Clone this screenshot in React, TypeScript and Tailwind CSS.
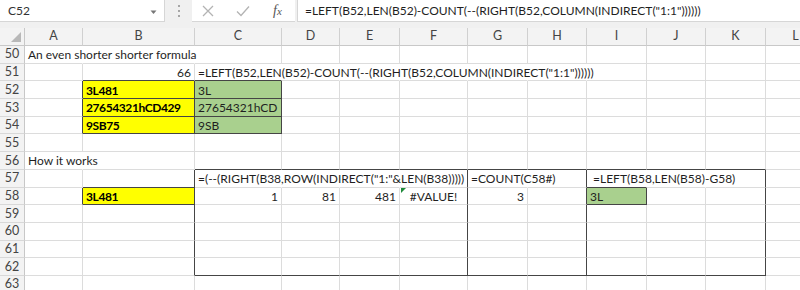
import React from "react";

const COLS = ["A", "B", "C", "D", "E", "F", "G", "H", "I", "J", "K", "L"];
const WIDTHS = [58, 112, 87, 58, 60, 68, 60, 59, 60, 59, 60, 60];
const ROWS = [50, 51, 52, 53, 54, 55, 56, 57, 58, 59, 60, 61, 62, 63];

type Cell = {
  t: string;
  align?: "l" | "r" | "c";
  bold?: boolean;
  fill?: "y" | "g";
  tri?: boolean;
};

const DATA: Record<string, Cell> = {
  A50: { t: "An even shorter shorter formula" },
  B51: { t: "66", align: "r" },
  C51: { t: '=LEFT(B52,LEN(B52)-COUNT(--(RIGHT(B52,COLUMN(INDIRECT("1:1"))))))' },
  B52: { t: "3L481", bold: true, fill: "y" },
  C52: { t: "3L", fill: "g" },
  B53: { t: "27654321hCD429", bold: true, fill: "y" },
  C53: { t: "27654321hCD", fill: "g" },
  B54: { t: "9SB75", bold: true, fill: "y" },
  C54: { t: "9SB", fill: "g" },
  A56: { t: "How it works" },
  C57: { t: '=(--(RIGHT(B38,ROW(INDIRECT("1:"&LEN(B38)))))' },
  G57: { t: "=COUNT(C58#)" },
  I57: { t: " =LEFT(B58,LEN(B58)-G58)" },
  B58: { t: "3L481", bold: true, fill: "y" },
  C58: { t: "1", align: "r" },
  D58: { t: "81", align: "r" },
  E58: { t: "481", align: "r" },
  F58: { t: "#VALUE!", align: "c", tri: true },
  G58: { t: "3", align: "r" },
  I58: { t: "3L", fill: "g" },
};

const DARK = new Set(["B52", "B53", "B54", "C52", "C53", "C54", "B58", "I58"]);
const HIDDEN_RIGHT = new Set([
  "A50", "B50",
  "C51", "D51", "E51", "F51", "G51", "H51",
  "A56",
  "C57", "D57", "E57", "G57", "I57", "J57",
]);

const isDark = (r: number, c: number) => c >= 0 && c < 12 && DARK.has(COLS[c] + r);

const rightDark = (r: number, c: number) =>
  isDark(r, c) || isDark(r, c + 1) || (r >= 57 && r <= 62 && [1, 5, 7, 10].includes(c));

const bottomDark = (r: number, c: number) =>
  isDark(r, c) || isDark(r + 1, c) || ((r === 56 || r === 62) && c >= 2 && c <= 10);

const FONT = { fontFamily: "Lato, 'Liberation Sans', sans-serif" } as const;

function GridCell({ r, c }: { r: number; c: number }) {
  const key = COLS[c] + r;
  const cell = DATA[key];
  const rd = rightDark(r, c);
  const bd = bottomDark(r, c);
  const rightCls = rd
    ? "border-r-[#454545]"
    : HIDDEN_RIGHT.has(key)
    ? "border-r-transparent"
    : "border-r-[#dcdcdc]";
  const bottomCls = bd ? "border-b-[#454545]" : "border-b-[#dcdcdc]";
  const fillCls = cell?.fill === "y" ? "bg-[#ffff00]" : cell?.fill === "g" ? "bg-[#a9d08e]" : "";
  const alignCls =
    cell?.align === "r" ? "justify-end pr-[3px]" : cell?.align === "c" ? "justify-center" : "justify-start pl-[3px]";
  return (
    <div
      className={`relative flex shrink-0 items-center h-full border-r border-b ${rightCls} ${bottomCls} ${fillCls} ${alignCls}`}
      style={{ width: WIDTHS[c] }}
    >
      {cell?.tri && (
        <div className="absolute left-[1px] top-0 w-0 h-0 border-t-[5px] border-t-[#1e8a3a] border-r-[5px] border-r-transparent" />
      )}
      {cell && (
        <span
          className={`whitespace-pre text-[12px] leading-none pt-[2px] ${
            cell.bold ? "font-bold text-black tracking-[-0.4px]" : "text-[#1f1f1f]"
          }`}
        >
          {cell.t}
        </span>
      )}
    </div>
  );
}

export default function App() {
  return (
    <div className="w-[800px] h-[290px] overflow-hidden bg-white" style={FONT}>
      {/* formula bar */}
      <div className="flex h-[28px] bg-[#f0f0f0] pb-[6px]">
        <div className="flex w-[165px] shrink-0 items-center justify-between bg-white border-b border-r border-[#d6d6d6] pl-[8px] pr-[7px]">
          <span className="text-[12px] text-[#333]">C52</span>
          <svg width="7" height="5" viewBox="0 0 7 5" className="mt-[4px]">
            <path d="M0.5 0.5 L3.5 4 L6.5 0.5 Z" fill="#777" />
          </svg>
        </div>
        <div className="flex w-[27px] shrink-0 items-center justify-center">
          <div className="flex flex-col gap-[3px]">
            <div className="w-[2px] h-[2px] bg-[#a6a6a6]" />
            <div className="w-[2px] h-[2px] bg-[#a6a6a6]" />
            <div className="w-[2px] h-[2px] bg-[#a6a6a6]" />
          </div>
        </div>
        <div className="flex w-[103px] shrink-0 items-center bg-white border-b border-[#d6d6d6]">
          <svg width="12" height="12" viewBox="0 0 12 12" className="ml-[10px]">
            <path d="M1 1 L11 11 M11 1 L1 11" stroke="#b3b3b3" strokeWidth="1.3" fill="none" />
          </svg>
          <svg width="14" height="12" viewBox="0 0 14 12" className="ml-[22px]">
            <path d="M1 6.5 L5 10.5 L13 1.5" stroke="#b3b3b3" strokeWidth="1.3" fill="none" />
          </svg>
          <span
            className="ml-[23px] text-[14px] italic text-[#555]"
            style={{ fontFamily: "'Liberation Serif', serif" }}
          >
            f<span className="text-[11px]">x</span>
          </span>
        </div>
        <div className="ml-[2px] flex flex-1 items-center bg-white border-b border-l border-[#d6d6d6] pl-[7px]">
          <span className="whitespace-pre text-[12px] text-[#1f1f1f]">
            {'=LEFT(B52,LEN(B52)-COUNT(--(RIGHT(B52,COLUMN(INDIRECT("1:1"))))))'}
          </span>
        </div>
      </div>

      {/* column headers */}
      <div className="flex h-[18px] bg-[#f3f3f3]">
        <div className="relative w-[25px] shrink-0 border-r border-b border-[#c8c8c8]">
          <div className="absolute right-[3px] bottom-[3px] w-0 h-0 border-l-[10px] border-l-transparent border-b-[10px] border-b-[#b8b8b8]" />
        </div>
        {COLS.map((c, i) => (
          <div
            key={c}
            className="flex shrink-0 items-center justify-center border-r border-b border-[#d0d0d0] border-b-[#c8c8c8] text-[12.5px] text-[#444]"
            style={{ width: WIDTHS[i] }}
          >
            {c}
          </div>
        ))}
      </div>

      {/* rows */}
      {ROWS.map((r) => (
        <div key={r} className="flex h-[17.7px]">
          <div className="flex w-[25px] shrink-0 items-center justify-center bg-[#f3f3f3] border-r border-b border-[#c8c8c8] border-b-[#d8d8d8] text-[12.5px] text-[#444] pt-[1px]">
            {r}
          </div>
          {COLS.map((_, c) => (
            <GridCell key={c} r={r} c={c} />
          ))}
        </div>
      ))}
    </div>
  );
}
